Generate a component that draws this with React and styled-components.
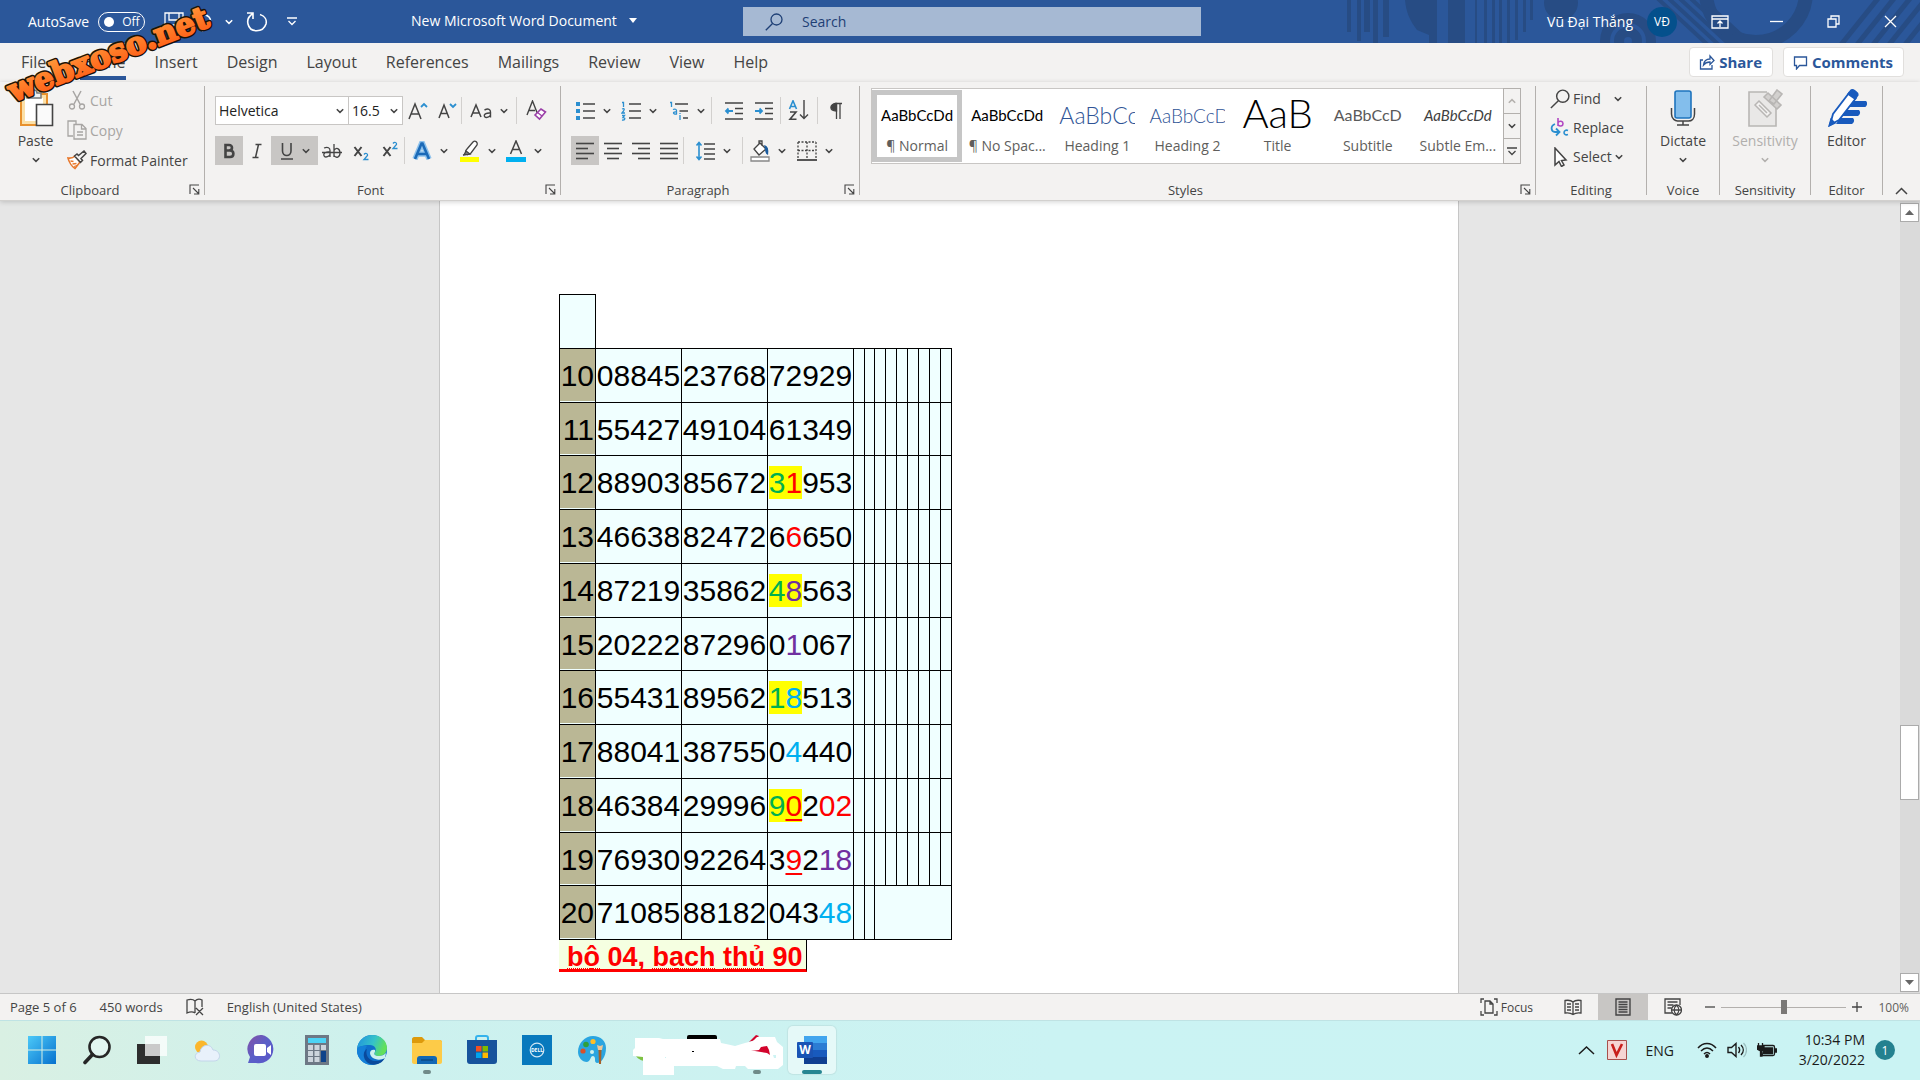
import styled, { createGlobalStyle, css } from "styled-components";

const GlobalStyle = createGlobalStyle`
  * {
    box-sizing: border-box;
  }
  body {
    margin: 0;
    overflow: hidden;
    font-family: "Open Sans", "Noto Sans", sans-serif;
    font-size: 14px;
    color: #444;
  }
  button, input, select {
    font: inherit;
    color: inherit;
    margin: 0;
  }
  button {
    padding: 0;
    border: none;
    background: none;
    white-space: nowrap;
  }
  svg {
    display: block;
    flex: none;
  }
`;

const Window = styled.div`
  position: relative;
  display: flex;
  flex-direction: column;
  height: 100vh;
`;

/* ---------- title bar ---------- */

const TitleBar = styled.header`
  position: relative;
  display: flex;
  align-items: center;
  height: 43px;
  flex: none;
  background: #2b579a;
  color: #fff;
`;

const TitlePattern = styled.svg`
  position: absolute;
  top: 0;
  right: 0;
`;

const QuickAccess = styled.div`
  display: flex;
  align-items: center;
  flex: 0 1 411px;
  padding-left: 28px;
`;

const AutoSave = styled.label`
  display: flex;
  align-items: center;
  gap: 9px;
  margin-right: 18px;
`;

const Pill = styled.span`
  display: flex;
  align-items: center;
  gap: 8px;
  width: 47px;
  height: 20px;
  padding-left: 5px;
  border: 1px solid #fff;
  border-radius: 10px;
  font-size: 12px;
  input {
    appearance: none;
    width: 10px;
    height: 10px;
    border-radius: 50%;
    background: #fff;
  }
`;

const QuickButton = styled.button`
  display: flex;
  justify-content: center;
  width: ${(p) => p.$w}px;
`;

const DocName = styled.button`
  display: flex;
  align-items: center;
  gap: 12px;
  flex: 0 1 332px;
  padding-bottom: 3px;
`;

const SearchBox = styled.label`
  display: flex;
  align-items: center;
  gap: 19px;
  flex: 0 1 458px;
  height: 29px;
  padding-left: 22px;
  background: #a6b9d3;
  color: #1e3f75;
  input {
    flex: 1;
    border: none;
    outline: none;
    background: none;
    padding: 0;
  }
  input::placeholder {
    color: #1e3f75;
    opacity: 1;
  }
`;

const Account = styled.div`
  position: relative;
  display: flex;
  align-items: center;
  margin-left: auto;
  padding-right: 1px;
`;

const Avatar = styled.span`
  display: flex;
  align-items: center;
  justify-content: center;
  width: 30px;
  height: 30px;
  margin: 0 14px;
  border-radius: 50%;
  background: #04508c;
  font-size: 12px;
`;

const WindowButton = styled.button`
  display: flex;
  justify-content: center;
  width: 57px;
`;

/* ---------- tabs ---------- */

const TabRow = styled.nav`
  display: flex;
  align-items: flex-end;
  height: 39px;
  flex: none;
  padding: 0 16px 0 6px;
  background: #f3f2f1;
`;

const Tab = styled.button`
  height: 37px;
  padding: 3px 14px 2px 15px;
  font-size: 16px;
  &:first-child {
    margin-right: 5px;
  }
  span {
    display: block;
    border-bottom: 4px solid ${(p) => (p.$active ? "#2b579a" : "transparent")};
    line-height: 28px;
  }
`;

const TabActions = styled.div`
  display: flex;
  align-self: flex-start;
  gap: 10px;
  margin: 4px 0 0 auto;
`;

const ActionButton = styled.button`
  display: flex;
  align-items: center;
  gap: 4px;
  height: 30px;
  padding: 0 10px 0 9px;
  border: 1px solid #e1dfdd;
  border-radius: 4px;
  background: #fff;
  color: #2b579a;
  font-size: 15px;
  font-weight: 700;
`;

/* ---------- ribbon ---------- */

const Ribbon = styled.div`
  position: relative;
  z-index: 1;
  display: grid;
  grid-template-columns: 205px 356px 299px 1fr 111px 73px 91px 72px 37px;
  flex: none;
  height: 119px;
  padding: 4px 0 5px;
  background: #f3f2f1;
  border-bottom: 1px solid #d2d0ce;
  box-shadow: 0 1px 5px rgba(0, 0, 0, 0.18);
`;

const Group = styled.section`
  display: flex;
  flex-direction: column;
  border-right: 1px solid #b3b0ad;
  min-width: 0;
`;

const GroupBody = styled.div`
  flex: 1;
  padding: ${(p) => p.$pad || "10px 0 0 10px"};
`;

const GroupFooter = styled.footer`
  display: flex;
  align-items: center;
  height: 12px;
  font-size: 13px;
  line-height: 16px;
  span {
    flex: 1;
    text-align: center;
    padding-top: 2px;
  }
  button {
    margin: 0 4px 0 9px;
  }
`;

const ToolRow = styled.div`
  display: flex;
  align-items: center;
  height: 29px;
  & + & {
    margin-top: 11px;
  }
`;

const Tool = styled.button`
  display: flex;
  align-items: center;
  justify-content: center;
  gap: 8px;
  width: ${(p) => p.$w || 28}px;
  height: 29px;
  ${(p) =>
    p.$on &&
    css`
      background: #c8c6c4;
    `}
`;

const Divider = styled.i`
  width: 1px;
  height: 27px;
  background: #d2d0ce;
`;

const SelectWrap = styled.label`
  display: flex;
  align-items: center;
  width: ${(p) => p.$w}px;
  height: 29px;
  padding-right: 4px;
  border: 1px solid #c8c6c4;
  background: #fff;
  & + & {
    border-left: none;
  }
  select {
    flex: 1;
    min-width: 0;
    appearance: none;
    border: none;
    outline: none;
    background: none;
    padding: 0 0 0 3px;
    color: #222;
  }
`;

const ClipboardBody = styled.div`
  display: flex;
  flex: 1;
  padding-left: 12px;
`;

const BigButton = styled.button`
  display: flex;
  flex-direction: column;
  align-items: center;
  justify-content: flex-start;
  width: 100%;
  height: 92px;
  padding-top: 3px;
  color: ${(p) => (p.$off ? "#b1afad" : "#444")};
  > span {
    line-height: 20px;
    margin: 4px 0 6px;
  }
`;

const PasteSlot = styled.div`
  width: 47px;
`;

const StackedList = styled.div`
  display: flex;
  flex-direction: column;
`;

const StackedButton = styled.button`
  display: flex;
  align-items: center;
  gap: 3px;
  height: ${(p) => p.$h || 30}px;
  padding: 0 0 2px ${(p) => p.$left || 8}px;
  color: ${(p) => (p.$off ? "#a7a5a3" : "#444")};
  svg + span + svg {
    margin-left: ${(p) => p.$chev || 0}px;
  }
`;

const Gallery = styled.div`
  display: flex;
  height: 76px;
`;

const Tiles = styled.div`
  display: flex;
  flex: 1;
  min-width: 0;
  padding: 1px 0;
  border: 1px solid #c8c6c4;
  border-right: none;
  background: #fff;
`;

const Tile = styled.button`
  display: flex;
  flex-direction: column;
  align-items: center;
  flex: 1;
  min-width: 0;
  border: 5px solid ${(p) => (p.$active ? "#c6c6c6" : "transparent")};
  color: #605e5c;
  line-height: 20px;
`;

const Sample = styled.span`
  display: flex;
  align-items: center;
  justify-content: ${(p) => (p.$clip ? "flex-start" : "center")};
  width: 76px;
  height: 36px;
  margin-bottom: 5px;
  padding-top: ${(p) => (p.$tall ? 0 : 4)}px;
  overflow: hidden;
  white-space: nowrap;
  line-height: 1;
  color: ${(p) => p.$color || "#000"};
  font-size: ${(p) => p.$size || 15}px;
  font-weight: ${(p) => p.$weight || 400};
  font-style: ${(p) => (p.$italic ? "italic" : "normal")};
  font-family: Lato, "Open Sans", sans-serif;
`;

const GalleryArrows = styled.div`
  display: flex;
  flex-direction: column;
  width: 18px;
  button {
    display: flex;
    align-items: center;
    justify-content: center;
    flex: 1;
    border: 1px solid #b3b0ad;
  }
  button + button {
    border-top: none;
  }
`;

const Collapse = styled.button`
  display: flex;
  align-items: flex-end;
  justify-content: center;
`;

/* ---------- document ---------- */

const Workspace = styled.main`
  display: flex;
  flex: 1;
  min-height: 0;
  background: #e6e6e6;
`;

const Canvas = styled.div`
  flex: 1;
  display: flex;
  justify-content: center;
  padding-right: 2px;
  overflow: hidden;
`;

const Page = styled.article`
  width: 1020px;
  min-height: 100%;
  padding: 93px 0 0 119px;
  border: 1px solid #c6c6c6;
  border-width: 0 1px;
  background: #fff;
  color: #000;
  font-family: "Liberation Sans", Arial, sans-serif;
`;

const NumberTable = styled.table`
  width: 393px;
  table-layout: fixed;
  border-collapse: collapse;
  font-size: 30px;
  line-height: 34px;
  tr {
    height: 54px;
  }
  tr:nth-child(4n + 3) {
    height: 53px;
  }
  th,
  td {
    padding: 1px 0 0;
    border: 1px solid #000;
    background: #f0ffff;
    font-weight: 400;
    text-align: center;
  }
  th {
    padding-right: 1px;
    background: #bab795;
    box-shadow: inset 0 -1px #f0ffff;
    text-align: right;
  }
  .gap {
    border: none;
    background: none;
  }
`;

const Col = styled.col`
  width: ${(p) => p.$w}px;
`;

const Digit = styled.span`
  color: ${(p) => p.$color};
  background: ${(p) => (p.$marked ? "#ff0" : "none")};
  ${(p) =>
    p.$under &&
    css`
      text-decoration: underline 2px;
      text-underline-offset: 3px;
      text-decoration-skip-ink: none;
    `}
`;

const Note = styled.p`
  display: inline-block;
  height: 32px;
  margin: 0;
  padding: 0 3px 0 8px;
  border-right: 1px solid #000;
  border-bottom: 3px solid #f00;
  background: #f5ffe1;
  color: #f00;
  font-size: 27px;
  font-weight: 700;
  line-height: 34px;
  white-space: nowrap;
`;

const Misspelt = styled.span`
  text-decoration: underline dotted 1px #f00;
  text-underline-offset: 2px;
`;

const ScrollBar = styled.div`
  display: flex;
  flex-direction: column;
  width: 20px;
  padding: 2px 1px 1px 0;
  background: #dadada;
`;

const ScrollButton = styled.button`
  display: flex;
  align-items: center;
  justify-content: center;
  height: 19px;
  border: 1px solid #ababab;
  background: #fff;
`;

const ScrollTrack = styled.div`
  display: flex;
  flex-direction: column;
  flex: 1;
  &::before {
    content: "";
    flex: 505;
  }
  &::after {
    content: "";
    flex: 174;
  }
`;

const ScrollThumb = styled.div`
  flex: 73;
  border: 1px solid #ababab;
  background: #fff;
`;

/* ---------- status bar ---------- */

const StatusBar = styled.footer`
  display: flex;
  align-items: center;
  height: 27px;
  flex: none;
  padding: 0 11px 0 10px;
  border-top: 1px solid #c6c6c6;
  background: #f3f2f1;
  font-size: 13px;
`;

const StatusInfo = styled.div`
  display: flex;
  align-items: center;
  gap: 23px;
  flex: 1;
`;

const FocusButton = styled.button`
  display: flex;
  align-items: center;
  gap: 3px;
  margin-right: 15px;
  font-size: 12px;
`;

const ViewButton = styled.button`
  display: flex;
  align-items: center;
  justify-content: center;
  width: 50px;
  height: 26px;
  background: ${(p) => (p.$on ? "#c8c6c4" : "none")};
`;

const Zoom = styled.div`
  display: flex;
  align-items: center;
  gap: 6px;
  margin-left: 7px;
  font-size: 12px;
  input {
    appearance: none;
    width: 125px;
    height: 14px;
    background: linear-gradient(#b3b0ad, #b3b0ad) center / 100% 1px no-repeat;
  }
  input::-webkit-slider-thumb {
    appearance: none;
    width: 6px;
    height: 14px;
    background: #7a7876;
  }
  output {
    width: 41px;
    text-align: right;
    color: #605e5c;
  }
`;

/* ---------- taskbar ---------- */

const TaskBar = styled.footer`
  position: relative;
  display: flex;
  align-items: center;
  height: 60px;
  flex: none;
  padding: 0 25px 0 14px;
  background: linear-gradient(90deg, #d9f0e3, #cdf1ee 20%, #cbf3f3 55%, #caf3f3);
  box-shadow: inset 0 1px #bfe3e4;
  color: #1b1b1b;
`;

const AppButton = styled.button`
  position: relative;
  display: flex;
  align-items: center;
  justify-content: center;
  width: 55px;
  height: 48px;
  ${(p) =>
    p.$running &&
    css`
      &::after {
        content: "";
        position: absolute;
        bottom: 0;
        width: ${p.$active ? 20 : 8}px;
        height: 4px;
        border-radius: 2px;
        background: ${p.$active ? "#268692" : "#6f8a88"};
      }
    `}
`;

const ActiveTile = styled(AppButton)`
  width: 48px;
  margin-left: 4px;
  border-radius: 5px;
  background: #e5f9f8;
  box-shadow: 0 0 1px 1px rgba(0, 0, 0, 0.06);
`;

const Smudge = styled.svg`
  position: absolute;
  left: 632px;
  top: 13px;
`;

const Tray = styled.div`
  display: flex;
  align-items: center;
  margin-left: auto;
`;

const TrayButton = styled.button`
  margin-right: ${(p) => p.$gap}px;
`;

const Network = styled.div`
  display: flex;
  align-items: center;
  gap: 10px;
  margin: 0 14px 0 23px;
`;

const Clock = styled.time`
  width: 74px;
  margin-right: 10px;
  text-align: right;
  line-height: 20px;
`;

const Badge = styled.span`
  display: flex;
  align-items: center;
  justify-content: center;
  width: 20px;
  height: 20px;
  border-radius: 50%;
  background: #24818f;
  color: #fff;
  font-size: 12px;
`;

const Watermark = styled.svg`
  position: absolute;
  z-index: 2;
  left: 0;
  top: 0;
  pointer-events: none;
`;

/* ---------- icons ---------- */

const Icon = ({ w = 20, h = w, box, color = "#444", children }) => (
  <svg
    width={w}
    height={h}
    viewBox={box || `0 0 ${w} ${h}`}
    fill="none"
    stroke={color}
    strokeWidth="1.3"
  >
    {children}
  </svg>
);

const Chevron = ({ color = "#444", up }) => (
  <Icon w={8} h={6} color={color}>
    <path d={up ? "M.8 4.8 4 1.6l3.2 3.2" : "M.8 1.2 4 4.4l3.2-3.2"} strokeWidth="1.5" />
  </Icon>
);

const Launcher = () => (
  <Icon w={11} h={11}>
    <path d="M1 10V1h9M4 4l5.5 5.5M9.8 5v5H5" strokeWidth="1.1" />
  </Icon>
);

const Triangle = ({ up }) => (
  <svg width="9" height="5" viewBox="0 0 9 5" fill="#666">
    <path d={up ? "M0 5 4.500 0 9 5Z" : "M0 0 4.500 5 9 0Z"} />
  </svg>
);

const Magnifier = ({ color = "#444", w = 18 }) => (
  <Icon w={w} box="0 0 18 18" color={color}>
    <circle cx="11.500" cy="6.500" r="5.500" />
    <path d="M7.500 10.500.8 17.200" />
  </Icon>
);

const Lines = ({ rows }) => (
  <Icon w={20}>
    {rows.map(([x1, x2], i) => (
      <path key={i} d={`M${x1} ${2.5 + i * 5}H${x2}`} strokeWidth="1.6" />
    ))}
  </Icon>
);

const PasteIcon = () => (
  <Icon w={36} h={38}>
    <path d="M3 5h26v31H3z" fill="#fff" stroke="#e8912d" strokeWidth="2" />
    <path d="M5.500 7.500h21v26h-21z" stroke="#fbe0a8" strokeWidth="3" />
    <path d="M9 9V4h4c0-4 6-4 6 0h4v5z" fill="#f3f2f1" stroke="#777" strokeWidth="1.5" />
    <path d="M18.500 15.500h16v21h-16z" fill="#fafafa" strokeWidth="1.6" />
  </Icon>
);

const CutIcon = () => (
  <Icon w={20} color="#a7a5a3">
    <path d="m6 1 7 13M14 1 7 14" strokeWidth="1.5" />
    <circle cx="5" cy="16.500" r="2.500" />
    <circle cx="15" cy="16.500" r="2.500" />
  </Icon>
);

const CopyIcon = () => (
  <Icon w={20} color="#a7a5a3">
    <path d="M6 16H1V1h8v3M7 4.500h8l4 4V19H7zM14.500 5v4H19M10 12h6M10 15h6" />
  </Icon>
);

const BrushIcon = () => (
  <Icon w={20}>
    <path d="M1 8c3 .5 5 0 7-2l5 6-5 6.500C5 17 2 12 1 8z" fill="#fff" stroke="#e8792d" strokeWidth="1.6" />
    <path d="m3.500 11 3 .5M5.500 14l4-.5M7 16.500l3-1" stroke="#e8792d" />
    <path d="m7.500 6 6 6.500 2-2-1.500-2 5-5-2-2.500-5.500 4.500L10 4z" fill="#f3f2f1" strokeWidth="1.5" />
  </Icon>
);

const GrowFont = ({ shrink }) => (
  <Icon w={20}>
    <path
      d={shrink ? "m2 17 5-13 5 13M4 12.500h6" : "m1 18 6-15 6 15M3.200 13h7.600"}
      strokeWidth="1.5"
    />
    <path d={shrink ? "m13 3 3 3 3-3" : "m13 6 3-3 3 3"} stroke="#2b8fd0" strokeWidth="1.8" />
  </Icon>
);

const ClearIcon = () => (
  <Icon w={21}>
    <path d="m1 15 5.500-14L12 15M3 10.500h6" strokeWidth="1.4" />
    <path d="m9 15 6-6 4.500 3-6 7z" fill="#fff" stroke="#9b3fa8" strokeWidth="1.6" />
    <path d="m11.500 12.500 4.500 3.500" stroke="#9b3fa8" />
  </Icon>
);

const CaseIcon = () => (
  <Icon w={22} h={18}>
    <path d="M1 15 6 3l5 12M2.700 11h6.600" strokeWidth="1.5" />
    <path d="M14.500 8c4-2 6-.5 6 2v5.500M20.500 11c-8-.5-7 4.500-4 4.500 2 0 4-1.500 4-3" strokeWidth="1.4" />
  </Icon>
);

const BoldIcon = () => (
  <Icon w={14} h={18}>
    <path d="M3.500 3H7c4 0 4 5.500 0 5.500H3.500zM3.500 8.500H8c4.500 0 4.500 6.500 0 6.500H3.500z" strokeWidth="2.600" />
  </Icon>
);

const ItalicIcon = () => (
  <Icon w={12} h={18}>
    <path d="M4.500 2.500h6M1.500 15.500h6M7.500 2.500l-3 13" strokeWidth="1.5" />
  </Icon>
);

const UnderlineIcon = () => (
  <Icon w={14} h={18}>
    <path d="M2.500 1v8c0 6 8.500 6 8.500 0V1M1 17h12" strokeWidth="1.6" />
  </Icon>
);

const StrikeIcon = () => (
  <Icon w={20} h={18}>
    <path d="M2 6c4-1.500 6 0 6 2.500V15M8 10c-8-1-7 5-4 5 2 0 4-1.500 4-3M12 2v13M12 8.500c2-4 6-2 6 2.500s-4 5.500-6 2.500M0 10.500h20" />
  </Icon>
);

const ScriptIcon = ({ sup }) => (
  <Icon w={16} h={20}>
    <path d="m1.500 6 7 9M8.500 6l-7 9" strokeWidth="2" />
    <path
      d={sup ? "M11 2.500c1.500-2 4-1 3.500 1L11 7.500h4.500" : "M11 13.500c1.500-2 4-1 3.500 1L11 18.500h4.500"}
      stroke="#2b8fd0"
    />
  </Icon>
);

const EffectsIcon = () => (
  <Icon w={20} h={20}>
    <path d="M3 18 9.500 2.500h1L17 18M5.500 13h9" stroke="#8ec2ec" strokeWidth="5.500" />
    <path d="m3 18 6.500-15.500h1L17 18M6 13h8" stroke="#1b6ab8" strokeWidth="2.600" />
  </Icon>
);

const HighlightIcon = () => (
  <Icon w={21} h={22}>
    <path d="m4 15 3-1 2 1M7 13c-1-2 0-3 1-4l6-7c2-2 5 0 4 3l-6 8c-1 1-3 2-5 0z" fill="#fff" />
    <path d="m5 15 2-4 4 3z" fill="#777" />
    <path d="M1 17h19v5H1z" fill="#ff0" stroke="none" />
  </Icon>
);

const FontColorIcon = () => (
  <Icon w={20} h={22}>
    <path d="M4.500 14 10 1l5.500 13M6.500 9.500h7" strokeWidth="1.5" />
    <path d="M0 17h20v5H0z" fill="#00b0f0" stroke="none" />
  </Icon>
);

const BulletsIcon = () => (
  <Icon w={20}>
    <path d="M1 1h4v4H1zM1 8h4v4H1zM1 15h4v4H1z" fill="#2b8fd0" stroke="none" />
    <path d="M8 3h12M8 10h12M8 17h12" strokeWidth="1.6" />
  </Icon>
);

const NumberingIcon = () => (
  <Icon w={20}>
    <path
      d="M1 1.500h1.500V6M1 8c3-1 3 .5 0 4h3M1 14.500h2.500L2 16.500c3 0 2 3-1 2.500"
      stroke="#2b8fd0"
    />
    <path d="M8 3h12M8 10h12M8 17h12" strokeWidth="1.6" />
  </Icon>
);

const MultilevelIcon = () => (
  <Icon w={20}>
    <path d="M1 1.500h1.500V6M4 8.500c2-1 3.500 0 3.500 1v3.500c-4 .5-4-2.500 0-2M11 14v5M11 12v1" stroke="#2b8fd0" />
    <path d="M6 3h13M10.500 10H19M14 17h5" strokeWidth="1.6" />
  </Icon>
);

const IndentIcon = ({ right }) => (
  <Icon w={20}>
    <path d="M1 2h18M11 7.500h8M11 12.500h8M1 18h18" strokeWidth="1.5" />
    <path
      d={right ? "M1 10h7M5.500 7.500 8 10l-2.500 2.500" : "M9 10H2M4.500 7.500 2 10l2.500 2.500"}
      stroke="#2b8fd0"
      strokeWidth="1.8"
    />
  </Icon>
);

const SortIcon = () => (
  <Icon w={22}>
    <path d="M1.500 9 5 .8 8.500 9M2.500 6.500h5" stroke="#2b8fd0" strokeWidth="1.6" />
    <path d="M2 12h6l-6 7.200h6.500" strokeWidth="1.6" />
    <path d="M16 0v18.500M12 14.500l4 4 4-4" strokeWidth="1.4" />
  </Icon>
);

const PilcrowIcon = () => (
  <Icon w={14} h={20}>
    <path d="M7.500 18V2.500M11 18V2.500M13 2.500H6" strokeWidth="1.3" />
    <path d="M7.500 2.500C0 2.500 0 10 7.500 10z" fill="#444" />
  </Icon>
);

const SpacingIcon = () => (
  <Icon w={20}>
    <path d="M9 3h11M9 8h11M9 13h11M9 18h11" strokeWidth="1.5" />
    <path d="M4 2v16M1.500 4.500 4 1.500l2.500 3M1.500 15.500l2.500 3 2.500-3" stroke="#2b8fd0" strokeWidth="1.6" />
  </Icon>
);

const ShadingIcon = () => (
  <Icon w={20} h={22}>
    <path d="m4 9 6-6 6 6-7 6zM9 4V1h3v5" fill="#fff" />
    <path d="M15 6c3 1 3 4 2.500 8-2-1-1.500-4-2.500-8z" fill="#1b5c9e" stroke="#1b5c9e" />
    <path d="M1 17h18v4H1z" fill="#fff" stroke="#888" />
  </Icon>
);

const BordersIcon = () => (
  <Icon w={20}>
    <path d="M1 1h18M1 1v17M19 1v17M10 1v17M1 9.500h18" strokeDasharray="2 1.500" />
    <path d="M0 19h20" strokeWidth="1.8" />
  </Icon>
);

const ReplaceIcon = () => (
  <Icon w={20}>
    <path d="M8 1v8M8 5.500c1.500-2 5-1.500 5 1.200s-3.500 3-5 1" stroke="#b146c2" strokeWidth="1.6" />
    <path d="M18 13.500c-5-2-5.500 6 0 4" stroke="#2b8fd0" strokeWidth="1.6" />
    <path d="M5 7C0 9 1 15 5 15h4M6 11.500 9.500 15 6 18.500" stroke="#2b8fd0" strokeWidth="1.8" />
  </Icon>
);

const CursorIcon = () => (
  <Icon w={18} h={20}>
    <path d="m3 1 11 12-4.500.5 2.500 4.500-2.500 1.500L7 14.500 3 18z" fill="#fff" strokeWidth="1.5" />
  </Icon>
);

const MicIcon = () => (
  <Icon w={26} h={38} box="0 -1 26 38">
    <rect x="5" y="1" width="16" height="27" rx="2" fill="#83beec" stroke="#1e74bd" strokeWidth="1.6" />
    <path d="M1.500 18v6c0 5 4 7 6 7h11c3 0 6-2 6-7v-6M13 31v4M7 35h12" strokeWidth="1.5" />
  </Icon>
);

const SensitivityIcon = () => (
  <Icon w={36} h={38} color="#b8b6b4">
    <path d="M20 3H2v34h27V19" strokeWidth="1.6" fill="#e9e8e7" />
    <path d="m8 16 4-4 12 12-4 4zM12 16l8 8" fill="#f3f2f1" strokeWidth="1.500" />
    <path d="m17 8 4-4 13 12-4 4zM22 12l8-11 5 4-8 10z" fill="#d2d0ce" strokeWidth="1.6" />
  </Icon>
);

const EditorIcon = () => (
  <Icon w={40} h={38}>
    <path d="M23 12h16c2 2 1 5-1 6H18zM18 21h14c2 2 1 5-1 6H14zM13 29h13c2 2 1 5-1 6H9z" fill="#185abd" stroke="none" />
    <path d="m22 4 7 5L12 31l-9 5 3-11z" fill="#fff" stroke="#185abd" strokeWidth="1.800" />
    <path d="m21 5 3-4c2-1 7 2 7 5l-3 4zM2 37l2-7 4 4z" fill="#185abd" stroke="#185abd" />
  </Icon>
);

const ShareIcon = () => (
  <Icon w={16} color="#2b579a">
    <path d="M4 6H1.500v9H13v-4M4.500 11C5 7 8 5 11 5V2l4 4.500-4 4V8C8 8 6 9 4.500 11z" />
  </Icon>
);

const CommentIcon = () => (
  <Icon w={15} color="#2b579a">
    <path d="M1.500 2h12v8.500H6.500L3.500 14v-3.500h-2z" />
  </Icon>
);

const taskIcons = {
  Start: (
    <svg width="30" height="30" viewBox="0 0 30 30">
      <defs>
        <linearGradient id="win" x1="0" y1="0" x2="1" y2="1">
          <stop offset="0" stopColor="#4cc9f8" />
          <stop offset="1" stopColor="#0671ce" />
        </linearGradient>
      </defs>
      <path d="M1 1h13.500v13.500H1zM15.500 1H29v13.500H15.500zM1 15.500h13.500V29H1zM15.500 15.500H29V29H15.500z" fill="url(#win)" />
    </svg>
  ),
  Search: (
    <svg width="30" height="30" viewBox="0 0 30 30" fill="none" stroke="#262626">
      <circle cx="17.500" cy="12" r="10" strokeWidth="2.600" fill="#e2f5f0" />
      <path d="m10.500 19.500-7.500 8" strokeWidth="3.600" strokeLinecap="round" />
    </svg>
  ),
  "Task View": (
    <svg width="30" height="30" viewBox="0 0 30 30">
      <path d="M0 9h23v20H0z" fill="#2d2d2d" />
      <path d="M8 1h22v20H8z" fill="#fff" fillOpacity=".75" />
    </svg>
  ),
  Weather: (
    <svg width="30" height="30" viewBox="0 0 30 30">
      <circle cx="9.500" cy="12" r="6.500" fill="#fbb62c" />
      <path d="M9 26c-7 0-8-8-1-9 1-8 11-9 13-2 8 0 9 11 1 11z" fill="#e8f1fb" stroke="#c3d6ea" />
    </svg>
  ),
  Chat: (
    <svg width="30" height="30" viewBox="0 0 30 30">
      <defs>
        <linearGradient id="chat" x1="0" y1="0" x2="1" y2="1">
          <stop offset="0" stopColor="#8550a6" />
          <stop offset=".5" stopColor="#5a5fc8" />
          <stop offset="1" stopColor="#5b55c9" />
        </linearGradient>
      </defs>
      <path d="M15 0a14 14 0 1 1-6 28H1l2-6A14 14 0 0 1 15 0z" fill="url(#chat)" />
      <rect x="7" y="9" width="12" height="12" rx="2" fill="#fff" />
      <path d="m20 13 4-3v10l-4-3z" fill="#fff" />
    </svg>
  ),
  Calculator: (
    <svg width="24" height="30" viewBox="0 0 24 30">
      <path d="M0 0h24v30H0z" fill="#6d7885" />
      <path d="M3 3h18v5H3z" fill="#4cd3f5" />
      <path d="M3 10h5v5H3zM9.500 10h5v5h-5zM16 10h5v5h-5zM3 16h5v5H3zM9.500 16h5v5h-5zM3 22h5v5H3zM9.500 22h5v5h-5z" fill="#ccd4dc" />
      <path d="M16 16h5v11h-5z" fill="#0f438a" />
    </svg>
  ),
  Edge: (
    <svg width="30" height="30" viewBox="0 0 30 30">
      <defs>
        <linearGradient id="edgeTop" x1="0" y1="0" x2="1" y2=".3">
          <stop offset="0" stopColor="#1f8fe0" />
          <stop offset=".6" stopColor="#35c3c8" />
          <stop offset="1" stopColor="#62e05a" />
        </linearGradient>
      </defs>
      <circle cx="15" cy="15" r="15" fill="#0f6fcb" />
      <path d="M0 14C1 5 8 0 15 0c9 0 15 6 15 13 0 5-4 8-8 8s-6-2-4-4c2-3 0-7-5-7C6 10 1 12 0 14z" fill="url(#edgeTop)" />
      <path d="M10 11c-5 6-2 16 7 19-11 1-18-8-17-16 1-3 6-4 10-3z" fill="#1580d8" />
      <path d="M10 14c-3 8 6 17 18 9-6 10-19 8-21-1-1-4 1-7 3-8z" fill="#0a4a9c" />
      <path d="M18 17c-2 2 0 4 4 4 3 0 5-1 7-3l-1 5c-7 4-15 0-15-5 0-3 3-4 5-3z" fill="#cdf1ee" />
    </svg>
  ),
  Explorer: (
    <svg width="30" height="30" viewBox="0 0 30 30">
      <path d="M0 4c0-1 1-2 2-2h8l3 3h15c1 0 2 1 2 2v4H0z" fill="#dd9a0c" />
      <path d="M0 8h10l3-3h15c1 0 2 1 2 2v20c0 1-1 2-2 2H2c-1 0-2-1-2-2z" fill="#fdcb48" />
      <path d="M5 29v-5c0-2 1-3 3-3h14c2 0 3 1 3 3v5z" fill="#1268b4" />
      <path d="M9 25h12" stroke="#0b4a86" strokeWidth="1.500" />
    </svg>
  ),
  Store: (
    <svg width="30" height="30" viewBox="0 0 30 30">
      <path d="M9 6V3c0-1 1-2 2-2h8c1 0 2 1 2 2v3" fill="none" stroke="#35b3ec" strokeWidth="2" />
      <path d="M0 5h30v21c0 2-1 3-3 3H3c-2 0-3-1-3-3z" fill="#17539c" />
      <path d="M9 11h5.500v5.500H9z" fill="#f25022" />
      <path d="M15.500 11H21v5.500h-5.500z" fill="#7fba00" />
      <path d="M9 17.500h5.500V23H9z" fill="#00a4ef" />
      <path d="M15.500 17.500H21V23h-5.500z" fill="#ffb900" />
    </svg>
  ),
  Dell: (
    <svg width="30" height="30" viewBox="0 0 30 30">
      <path d="M0 0h30v30H0z" fill="#0879bd" />
      <circle cx="15" cy="15" r="6.800" fill="none" stroke="#cfe6f4" strokeWidth="1.200" />
      <text x="15" y="17" textAnchor="middle" fontSize="5" fontWeight="700" fontFamily="Open Sans" fill="#fff">
        DELL
      </text>
    </svg>
  ),
  Paint: (
    <svg width="30" height="30" viewBox="0 0 30 30">
      <path d="M16 1c8 0 13 5 13 12 0 9-5 15-9 15-4-1 0-6-4-7-3 0-2 5-6 6C5 27 1 22 1 17 1 8 8 1 16 1z" fill="#2aa5e0" />
      <circle cx="6" cy="16" r="2.600" fill="#d8502a" />
      <circle cx="9" cy="9.500" r="2.800" fill="#2fa03c" />
      <circle cx="16" cy="6.500" r="2.600" fill="#ffbe26" />
      <circle cx="15" cy="17" r="2" fill="#cdf1ee" />
      <path d="m20 10 3 1 3-1-1 5h-4z" fill="#ecc79a" />
      <path d="M21.500 15h3l-.5 14h-2z" fill="#a5622a" />
    </svg>
  ),
};

const WordIcon = () => (
  <svg width="30" height="30" viewBox="0 0 30 30">
    <path d="M7 1h23v7H7z" fill="#41a5ee" />
    <path d="M7 8h23v7H7z" fill="#2b7cd3" />
    <path d="M7 15h23v7H7z" fill="#185abd" />
    <path d="M7 22h23v7H7z" fill="#103f91" />
    <rect x="0" y="7" width="16" height="16" rx="1" fill="#1a54b4" />
    <text x="8" y="19" textAnchor="middle" fontSize="12" fontWeight="700" fontFamily="Open Sans" fill="#fff">
      W
    </text>
  </svg>
);

/* ---------- data ---------- */

const tabs = [
  "File", "Home", "Insert", "Design", "Layout", "References",
  "Mailings", "Review", "View", "Help",
];

const styleTiles = [
  { label: "¶ Normal", text: "AaBbCcDd", active: true },
  { label: "¶ No Spac...", text: "AaBbCcDd" },
  { label: "Heading 1", text: "AaBbCc", size: 23, color: "#2f5496", weight: 300, clip: true },
  { label: "Heading 2", text: "AaBbCcD", size: 19, color: "#2f5496", weight: 300, clip: true },
  { label: "Title", text: "AaB", size: 40, weight: 300, tall: true },
  { label: "Subtitle", text: "AaBbCcD", color: "#5a5a5a", size: 16 },
  { label: "Subtle Em...", text: "AaBbCcDd", color: "#404040", italic: true },
];

const RED = "#f00";
const GREEN = "#00b050";
const PURPLE = "#7030a0";
const BLUE = "#00b0f0";

// the last number of each row is a list of runs: [text, colour, marked, underlined]
const rows = [
  ["10", "08845", "23768", [["72929"]]],
  ["11", "55427", "49104", [["61349"]]],
  ["12", "88903", "85672", [["3", GREEN, true], ["1", RED, true], ["953"]]],
  ["13", "46638", "82472", [["6"], ["6", RED], ["650"]]],
  ["14", "87219", "35862", [["4", GREEN, true], ["8", PURPLE, true], ["563"]]],
  ["15", "20222", "87296", [["0"], ["1", PURPLE], ["067"]]],
  ["16", "55431", "89562", [["1", GREEN, true], ["8", BLUE, true], ["513"]]],
  ["17", "88041", "38755", [["0"], ["4", BLUE], ["440"]]],
  ["18", "46384", "29996", [["9", GREEN, true], ["0", RED, true, true], ["2"], ["02", RED]]],
  ["19", "76930", "92264", [["3"], ["9", RED, false, true], ["2"], ["18", PURPLE]]],
  ["20", "71085", "88182", [["043"], ["48", BLUE]]],
];

const columns = [36, 86, 86, 86, 11, 10, 11, 11, 11, 11, 11, 11, 11];

const Footer = ({ label, launcher }) => (
  <GroupFooter>
    <span>{label}</span>
    {launcher && (
      <button aria-label={`${label} settings`}>
        <Launcher />
      </button>
    )}
  </GroupFooter>
);

const TitleSection = () => (
  <TitleBar>
    <TitlePattern width="620" height="43" viewBox="1300 0 620 43" fill="#274c84">
      <path d="M1347 0h4v32h-4zM1357 0h4v41h-4zM1364 0h6v32h-6zM1373 0h5v43h-5zM1383 0h6v37h-6zM1405 0h32v43h-8v-8l-12-5c-7-9-11-18-12-30zM1448 0h17v43h-17zM1475 0h2v43h-2zM1484 0h3v43h-3zM1492 0h3v43h-3zM1499 0h3v43h-3zM1507 0h3v43h-3zM1515 0h3v40h-3zM1523 0h3v32h-3zM1530 0h3v20h-3z" />
      <circle cx="1561" cy="3" r="17" />
      <g fill="none" stroke="#274c84">
        <circle cx="1628" cy="41" r="23" strokeWidth="10" />
        <circle cx="1628" cy="41" r="9" strokeWidth="10" />
        <circle cx="1756" cy="-8" r="50" strokeWidth="14" />
        <path d="m1655-4 54 50M1666-4l54 50M1677-4l54 50M1688-4l54 50M1699-4l54 50" strokeWidth="4" />
        <path d="m1840 46 40-50M1856 46l40-50M1872 46l40-50M1888 46l40-50M1904 46l40-50" strokeWidth="5" />
      </g>
    </TitlePattern>
    <QuickAccess>
      <AutoSave>
        AutoSave
        <Pill>
          <input type="checkbox" />
          Off
        </Pill>
      </AutoSave>
      <QuickButton $w={22} aria-label="Save">
        <Icon w={20} color="#fff">
          <path d="M1 1h18v18H4l-3-3zM5 1v7h10V1M6 19v-6h8v6" />
        </Icon>
      </QuickButton>
      <QuickButton $w={37} aria-label="Undo">
        <Icon w={20} color="#fff">
          <path d="M3 2v6h6M3 8c3-5 8-7 12-3 4 5 0 9-7 14" strokeWidth="1.600" />
        </Icon>
      </QuickButton>
      <QuickButton $w={14} aria-label="Undo list">
        <Chevron color="#fff" />
      </QuickButton>
      <QuickButton $w={42} aria-label="Redo">
        <Icon w={22} color="#fff">
          <path d="M1 2h6v6M14 3.500C19 5 21 9 20 13c-3 9-16 9-18 0C1 9 3 5 7 2.500" strokeWidth="1.600" />
        </Icon>
      </QuickButton>
      <QuickButton $w={28} aria-label="Customize">
        <Icon w={10} h={9} color="#fff">
          <path d="M0 1h10M1.500 4 5 7.500 8.500 4" />
        </Icon>
      </QuickButton>
    </QuickAccess>
    <DocName>
      New Microsoft Word Document
      <svg width="8" height="5" fill="#fff">
        <path d="M0 0h8L4 5z" />
      </svg>
    </DocName>
    <SearchBox>
      <Magnifier color="#1e3f75" />
      <input type="text" placeholder="Search" aria-label="Search" />
    </SearchBox>
    <Account>
      Vũ Đại Thắng
      <Avatar>VĐ</Avatar>
      <WindowButton aria-label="Ribbon display">
        <Icon w={18} h={14} color="#fff">
          <path d="M1 1h16v12H1zM1 4h16M9 12V6M6.500 8.500 9 6l2.500 2.500" />
        </Icon>
      </WindowButton>
      <WindowButton aria-label="Minimize">
        <Icon w={13} color="#fff">
          <path d="M0 6.500h13" />
        </Icon>
      </WindowButton>
      <WindowButton aria-label="Restore">
        <Icon w={13} color="#fff">
          <path d="M1 4h8v8H1zM4 4V1h8v8H9" />
        </Icon>
      </WindowButton>
      <WindowButton aria-label="Close">
        <Icon w={13} color="#fff">
          <path d="m1 1 11 11M12 1 1 12" />
        </Icon>
      </WindowButton>
    </Account>
  </TitleBar>
);

const RibbonSection = () => (
  <Ribbon>
    <Group>
      <ClipboardBody>
        <PasteSlot>
          <BigButton>
            <PasteIcon />
            <span>Paste</span>
            <Chevron />
          </BigButton>
        </PasteSlot>
        <StackedList>
          <StackedButton $off>
            <CutIcon />
            <span>Cut</span>
          </StackedButton>
          <StackedButton $off>
            <CopyIcon />
            <span>Copy</span>
          </StackedButton>
          <StackedButton>
            <BrushIcon />
            <span>Format Painter</span>
          </StackedButton>
        </StackedList>
      </ClipboardBody>
      <Footer label="Clipboard" launcher />
    </Group>

    <Group>
      <GroupBody>
        <ToolRow>
          <SelectWrap $w={134}>
            <select aria-label="Font">
              <option>Helvetica</option>
            </select>
            <Chevron />
          </SelectWrap>
          <SelectWrap $w={54}>
            <select aria-label="Font size">
              <option>16.5</option>
            </select>
            <Chevron />
          </SelectWrap>
          <Tool $w={30} aria-label="Grow font"><GrowFont /></Tool>
          <Tool aria-label="Shrink font"><GrowFont shrink /></Tool>
          <Divider />
          <Tool $w={54} aria-label="Change case"><CaseIcon /><Chevron /></Tool>
          <Divider />
          <Tool $w={38} aria-label="Clear formatting"><ClearIcon /></Tool>
        </ToolRow>
        <ToolRow>
          <Tool $on aria-label="Bold"><BoldIcon /></Tool>
          <Tool aria-label="Italic"><ItalicIcon /></Tool>
          <Tool $w={47} $on aria-label="Underline"><UnderlineIcon /><Chevron /></Tool>
          <Tool aria-label="Strikethrough"><StrikeIcon /></Tool>
          <Tool $w={30} aria-label="Subscript"><ScriptIcon /></Tool>
          <Tool aria-label="Superscript"><ScriptIcon sup /></Tool>
          <Divider />
          <Tool $w={50} aria-label="Text effects"><EffectsIcon /><Chevron /></Tool>
          <Tool $w={44} aria-label="Highlight"><HighlightIcon /><Chevron /></Tool>
          <Tool $w={50} aria-label="Font color"><FontColorIcon /><Chevron /></Tool>
        </ToolRow>
      </GroupBody>
      <Footer label="Font" launcher />
    </Group>

    <Group>
      <GroupBody>
        <ToolRow>
          <Tool $w={44} aria-label="Bullets"><BulletsIcon /><Chevron /></Tool>
          <Tool $w={48} aria-label="Numbering"><NumberingIcon /><Chevron /></Tool>
          <Tool $w={48} aria-label="Multilevel list"><MultilevelIcon /><Chevron /></Tool>
          <Divider />
          <Tool $w={44} aria-label="Decrease indent"><IndentIcon /></Tool>
          <Tool $w={16} aria-label="Increase indent"><IndentIcon right /></Tool>
          <Tool $w={8} as="span" />
          <Divider />
          <Tool $w={36} aria-label="Sort"><SortIcon /></Tool>
          <Divider />
          <Tool $w={36} aria-label="Show marks"><PilcrowIcon /></Tool>
        </ToolRow>
        <ToolRow>
          <Tool $on aria-label="Align left"><Lines rows={[[1, 19], [1, 13], [1, 19], [1, 13]]} /></Tool>
          <Tool aria-label="Center"><Lines rows={[[1, 19], [4, 16], [1, 19], [4, 16]]} /></Tool>
          <Tool aria-label="Align right"><Lines rows={[[1, 19], [7, 19], [1, 19], [7, 19]]} /></Tool>
          <Tool aria-label="Justify"><Lines rows={[[1, 19], [1, 19], [1, 19], [1, 19]]} /></Tool>
          <Divider />
          <Tool $w={58} aria-label="Line spacing"><SpacingIcon /><Chevron /></Tool>
          <Divider />
          <Tool $w={50} aria-label="Shading"><ShadingIcon /><Chevron /></Tool>
          <Tool $w={44} aria-label="Borders"><BordersIcon /><Chevron /></Tool>
        </ToolRow>
      </GroupBody>
      <Footer label="Paragraph" launcher />
    </Group>

    <Group>
      <GroupBody $pad="2px 14px 0 11px">
        <Gallery>
          <Tiles>
            {styleTiles.map((t) => (
              <Tile key={t.label} $active={t.active}>
                <Sample
                  $size={t.size}
                  $color={t.color}
                  $weight={t.weight}
                  $italic={t.italic}
                  $clip={t.clip}
                  $tall={t.tall}
                >
                  {t.text}
                </Sample>
                {t.label}
              </Tile>
            ))}
          </Tiles>
          <GalleryArrows>
            <button aria-label="Previous row"><Chevron up color="#b3b0ad" /></button>
            <button aria-label="Next row"><Chevron /></button>
            <button aria-label="More styles">
              <Icon w={10} h={9}>
                <path d="M0 1h10M1.500 4 5 7.500 8.500 4" />
              </Icon>
            </button>
          </GalleryArrows>
        </Gallery>
      </GroupBody>
      <Footer label="Styles" launcher />
    </Group>

    <Group>
      <GroupBody $pad="0 0 0 6px">
        <StackedButton $h={27} $chev={10}>
          <Magnifier w={20} />
          <span>Find</span>
          <Chevron />
        </StackedButton>
        <StackedButton $h={30}>
          <ReplaceIcon />
          <span>Replace</span>
        </StackedButton>
        <StackedButton $h={29} $left={10}>
          <CursorIcon />
          <span>Select</span>
          <Chevron />
        </StackedButton>
      </GroupBody>
      <Footer label="Editing" />
    </Group>

    <Group>
      <GroupBody $pad="0">
        <BigButton>
          <MicIcon />
          <span>Dictate</span>
          <Chevron />
        </BigButton>
      </GroupBody>
      <Footer label="Voice" />
    </Group>

    <Group>
      <GroupBody $pad="0">
        <BigButton $off>
          <SensitivityIcon />
          <span>Sensitivity</span>
          <Chevron color="#b1afad" />
        </BigButton>
      </GroupBody>
      <Footer label="Sensitivity" />
    </Group>

    <Group>
      <GroupBody $pad="0">
        <BigButton>
          <EditorIcon />
          <span>Editor</span>
        </BigButton>
      </GroupBody>
      <Footer label="Editor" />
    </Group>

    <Collapse aria-label="Collapse ribbon">
      <Icon w={13} h={10}>
        <path d="M1 9 6.500 3.500 12 9" strokeWidth="1.500" />
      </Icon>
    </Collapse>
  </Ribbon>
);

const DocumentSection = () => (
  <Workspace>
    <Canvas>
      <Page>
        <NumberTable>
          <colgroup>
            {columns.map((w, i) => (
              <Col key={i} $w={w} />
            ))}
          </colgroup>
          <tbody>
            <tr>
              <td />
              <td className="gap" colSpan={12} />
            </tr>
            {rows.map(([no, a, b, runs], r) => (
              <tr key={no}>
                <th scope="row">{no}</th>
                <td>{a}</td>
                <td>{b}</td>
                <td>
                  {runs.map(([text, color, marked, under], i) => (
                    <Digit key={i} $color={color} $marked={marked} $under={under}>
                      {text}
                    </Digit>
                  ))}
                </td>
                {r < rows.length - 1 ? (
                  columns.slice(4).map((_, i) => <td key={i} />)
                ) : (
                  <>
                    <td />
                    <td />
                    <td colSpan={7} />
                  </>
                )}
              </tr>
            ))}
          </tbody>
        </NumberTable>
        <Note>
          <Misspelt>bộ</Misspelt> 04, <Misspelt>bạch</Misspelt> <Misspelt>thủ</Misspelt> 90
        </Note>
      </Page>
    </Canvas>
    <ScrollBar>
      <ScrollButton aria-label="Scroll up"><Triangle up /></ScrollButton>
      <ScrollTrack>
        <ScrollThumb />
      </ScrollTrack>
      <ScrollButton aria-label="Scroll down"><Triangle /></ScrollButton>
    </ScrollBar>
  </Workspace>
);

const StatusSection = () => (
  <StatusBar>
    <StatusInfo>
      <span>Page 5 of 6</span>
      <span>450 words</span>
      <Icon w={18} h={18}>
        <path d="M9 15c-2-1.500-5-1.500-8 0V2c3-1 6-1 8 1 2-2 5-2 7-1v7M9 3v12M10 10l7 7M17 10l-7 7" />
      </Icon>
      <span>English (United States)</span>
    </StatusInfo>
    <FocusButton>
      <Icon w={18}>
        <path d="M4 1H1v4M14 1h3v4M4 17H1v-4M14 17h3v-4M5 3h5l3 3v9H5zM10 3v3h3" />
      </Icon>
      Focus
    </FocusButton>
    <ViewButton aria-label="Read mode">
      <Icon w={18} h={18}>
        <path d="M9 4C7 2 4 2 1 2.500V15c3-.5 6 0 8 1.500 2-1.500 5-2 8-1.500V2.500C14 2 11 2 9 4zM9 4v12.500M3 6h4M3 9h4M3 12h4M11 6h4M11 9h4M11 12h4" />
      </Icon>
    </ViewButton>
    <ViewButton $on aria-label="Print layout">
      <Icon w={16} h={18}>
        <path d="M1 1h14v16H1zM3.500 4h9M3.500 6.500h9M3.500 9h9M3.500 11.500h9M3.500 14h9" strokeWidth="1.400" />
      </Icon>
    </ViewButton>
    <ViewButton aria-label="Web layout">
      <Icon w={18} h={18}>
        <path d="M8 15H1V1h15v6M3.500 4h10M3.500 7h6M3.500 10h4" />
        <circle cx="12.500" cy="12" r="5" />
        <path d="M7.500 12h10M12.500 7c-3 3-3 7 0 10M12.500 7c3 3 3 7 0 10" />
      </Icon>
    </ViewButton>
    <Zoom>
      <Icon w={10}><path d="M0 5h10" /></Icon>
      <input type="range" min="0" max="100" defaultValue="50" aria-label="Zoom" />
      <Icon w={10}><path d="M0 5h10M5 0v10" /></Icon>
      <output>100%</output>
    </Zoom>
  </StatusBar>
);

const TaskSection = () => (
  <TaskBar>
    {Object.entries(taskIcons).map(([name, icon]) => (
      <AppButton key={name} aria-label={name} $running={name === "Explorer"}>
        {icon}
      </AppButton>
    ))}
    <AppButton $running aria-label="Browser" />
    <AppButton aria-label="Terminal" />
    <AppButton $running aria-label="Unikey" />
    <ActiveTile $running $active aria-label="Word">
      <WordIcon />
    </ActiveTile>
    <Smudge width="154" height="44" viewBox="0 0 154 44">
      <rect x="55" y="2" width="30" height="31" rx="2" fill="#000" />
      <path d="m117 9 7-7 3 1-4 4z" fill="#d3032c" />
      <path d="M2 20c2 4 5 7 10 8v-8z" fill="#7ec243" />
      <path d="M3 5h24l4 1h57l1 4 5 1 9 2 10-3 8-2 4-4h18l2 5 6 5v18l-5 4h-30l-3-3h-9l-1 3H91l-6-3H42v9H11V24L1 23v-6l2-2z" fill="#fff" />
      <path d="m119 18 8-1 2-3 6-1 2 4 1 5-3-2-12-2z" fill="#d3032c" />
      <path d="M60 18h2v1h-2z" />
      <path d="M33 24h1v1h-1zM141 22h3v3h-2z" fill="#cdf3f3" />
    </Smudge>
    <Tray>
      <TrayButton $gap={12} aria-label="Hidden icons">
        <Icon w={17} h={10} color="#1b1b1b">
          <path d="M1 9 8.500 2 16 9" strokeWidth="1.500" />
        </Icon>
      </TrayButton>
      <TrayButton $gap={19} aria-label="Input method">
        <svg width="20" height="20" viewBox="0 0 20 20">
          <path d="M.5.500h19v19H.5z" fill="#f6d5d3" stroke="#a8504c" />
          <path d="m5 4 4.500 11L15 4" fill="none" stroke="#c8201c" strokeWidth="2.600" />
        </svg>
      </TrayButton>
      <span>ENG</span>
      <Network>
        <Icon w={20} h={16} color="#1b1b1b">
          <path d="M1 6c5-6 13-6 18 0M4 9c4-4 8-4 12 0M7 12c2-2 4-2 6 0" strokeWidth="1.500" />
          <circle cx="10" cy="14" r="1.300" fill="#1b1b1b" />
        </Icon>
        <Icon w={20} h={16} color="#1b1b1b">
          <path d="M1 5.500h3.500L9 1.500v13l-4.500-4H1zM11.500 5c1.500 2 1.500 4 0 6M14 3c3 3 3 7 0 10" strokeWidth="1.400" />
          <path d="M16.500 1c4 4 4 10 0 14" stroke="#9bbfc0" />
        </Icon>
        <Icon w={20} h={16} color="#1b1b1b">
          <path d="M6 3.500h10c1 0 1.500.5 1.500 1.500v7c0 1-.5 1.500-1.500 1.500H6c-1 0-1-1-1-3" />
          <path d="M7 6h8.500v5.500H6.500zM18 7h2v3h-2zM0 4h7v3L5 9v5H3.500V9L0 7zM1.500 1v3M5.500 1v3" fill="#1b1b1b" />
        </Icon>
      </Network>
      <Clock>
        10:34 PM
        <br />
        3/20/2022
      </Clock>
      <Badge>1</Badge>
    </Tray>
  </TaskBar>
);

const App = () => (
  <Window>
    <GlobalStyle />
    <TitleSection />
    <TabRow>
      {tabs.map((tab) => (
        <Tab key={tab} $active={tab === "Home"}>
          <span>{tab}</span>
        </Tab>
      ))}
      <TabActions>
        <ActionButton>
          <ShareIcon />
          Share
        </ActionButton>
        <ActionButton>
          <CommentIcon />
          Comments
        </ActionButton>
      </TabActions>
    </TabRow>
    <RibbonSection />
    <DocumentSection />
    <StatusSection />
    <TaskSection />
    <Watermark width="240" height="120" viewBox="0 0 240 120">
      <defs>
        <linearGradient id="flame" x1="0" y1="0" x2="0" y2="1">
          <stop offset="0" stopColor="#ff9d3c" />
          <stop offset="1" stopColor="#ff5a14" />
        </linearGradient>
        <text
          id="brand"
          transform="translate(13 102) rotate(-21)"
          fontFamily="DejaVu Serif"
          fontWeight="700"
          fontSize="31"
          strokeLinejoin="round"
        >
          webxoso.net
        </text>
      </defs>
      <use href="#brand" fill="#1a1208" stroke="#1a1208" strokeWidth="5" />
      <use href="#brand" fill="url(#flame)" stroke="url(#flame)" strokeWidth="2" />
    </Watermark>
  </Window>
);

export default App;
